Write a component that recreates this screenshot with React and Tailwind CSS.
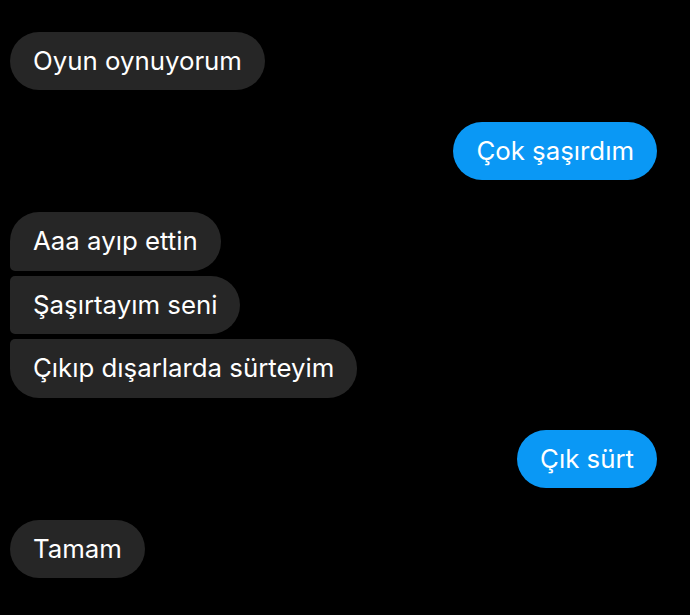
import React from 'react';

const font = { fontFamily: 'Inter, "Noto Sans", sans-serif' };

const Bubble = ({ text, mine, shape = 'rounded-[29px]', tall }) => (
    <div
        className={`flex items-center px-[23px] text-[25.8px] text-white leading-none ${tall ? 'h-[58.5px]' : 'h-[58px]'} ${shape} ${
            mine ? 'bg-[#0a98f5]' : 'bg-[#262626]'
        }`}
    >
        {text}
    </div>
);

const App = () => {
    return (
        <div className="w-[690px] h-[615px] bg-black overflow-hidden pl-[10px] pr-[33px] pt-[32px] flex flex-col" style={font}>
            <div className="flex">
                <Bubble text="Oyun oynuyorum" />
            </div>
            <div className="flex justify-end mt-[32px]">
                <Bubble text="Çok şaşırdım" mine />
            </div>
            <div className="flex flex-col items-start gap-[5px] mt-[32px]">
                <Bubble text="Aaa ayıp ettin" tall shape="rounded-[29px] rounded-bl-[5px]" />
                <Bubble text="Şaşırtayım seni" tall shape="rounded-[29px] rounded-l-[5px]" />
                <Bubble text="Çıkıp dışarlarda sürteyim" tall shape="rounded-[29px] rounded-tl-[5px]" />
            </div>
            <div className="flex justify-end mt-[32.5px]">
                <Bubble text="Çık sürt" mine />
            </div>
            <div className="flex mt-[32px]">
                <Bubble text="Tamam" />
            </div>
        </div>
    );
};

export default App;
